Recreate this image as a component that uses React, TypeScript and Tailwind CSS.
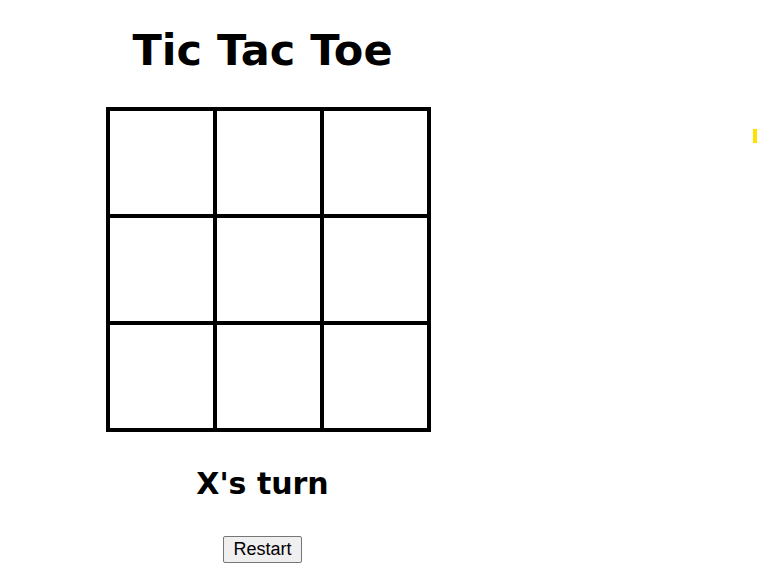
import { useState } from "react";

const comic = { fontFamily: '"Comic Sans MS", "DejaVu Sans", sans-serif' };

export default function App() {
  const [cells, setCells] = useState<(string | null)[]>(Array(9).fill(null));
  const [xNext, setXNext] = useState(true);

  const play = (i: number) => {
    if (cells[i]) return;
    const next = cells.slice();
    next[i] = xNext ? "X" : "O";
    setCells(next);
    setXNext(!xNext);
  };

  return (
    <div className="relative min-h-[588px] w-[759px] bg-white">
      {/* side marker */}
      <div className="absolute left-[753px] top-[129px] h-[14px] w-[4px] bg-[#ffe100]" />

      <div className="flex w-[525px] flex-col items-center pt-[22px]">
        <h1 className="text-[43px] font-bold leading-[56px] text-black" style={comic}>
          Tic Tac Toe
        </h1>

        {/* Board */}
        <div className="ml-[12px] mt-[29px] grid grid-cols-[repeat(3,103px)] grid-rows-[repeat(3,103px)] gap-[4px] bg-black p-[4px]">
          {cells.map((c, i) => (
            <button
              key={i}
              onClick={() => play(i)}
              className="flex items-center justify-center bg-white text-[56px] font-bold text-black"
              style={comic}
            >
              {c}
            </button>
          ))}
        </div>

        <h2 className="mt-[32px] text-[30px] font-bold leading-[40px] text-black" style={comic}>
          {xNext ? "X" : "O"}'s turn
        </h2>

        <button
          onClick={() => {
            setCells(Array(9).fill(null));
            setXNext(true);
          }}
          className="mt-[32px] rounded-[2px] border border-[#767676] bg-[#efefef] px-[9px] py-[2px] text-[18px] leading-[21px] text-black"
          style={{ fontFamily: '"Liberation Sans", Arial, sans-serif' }}
        >
          Restart
        </button>
      </div>
    </div>
  );
}
